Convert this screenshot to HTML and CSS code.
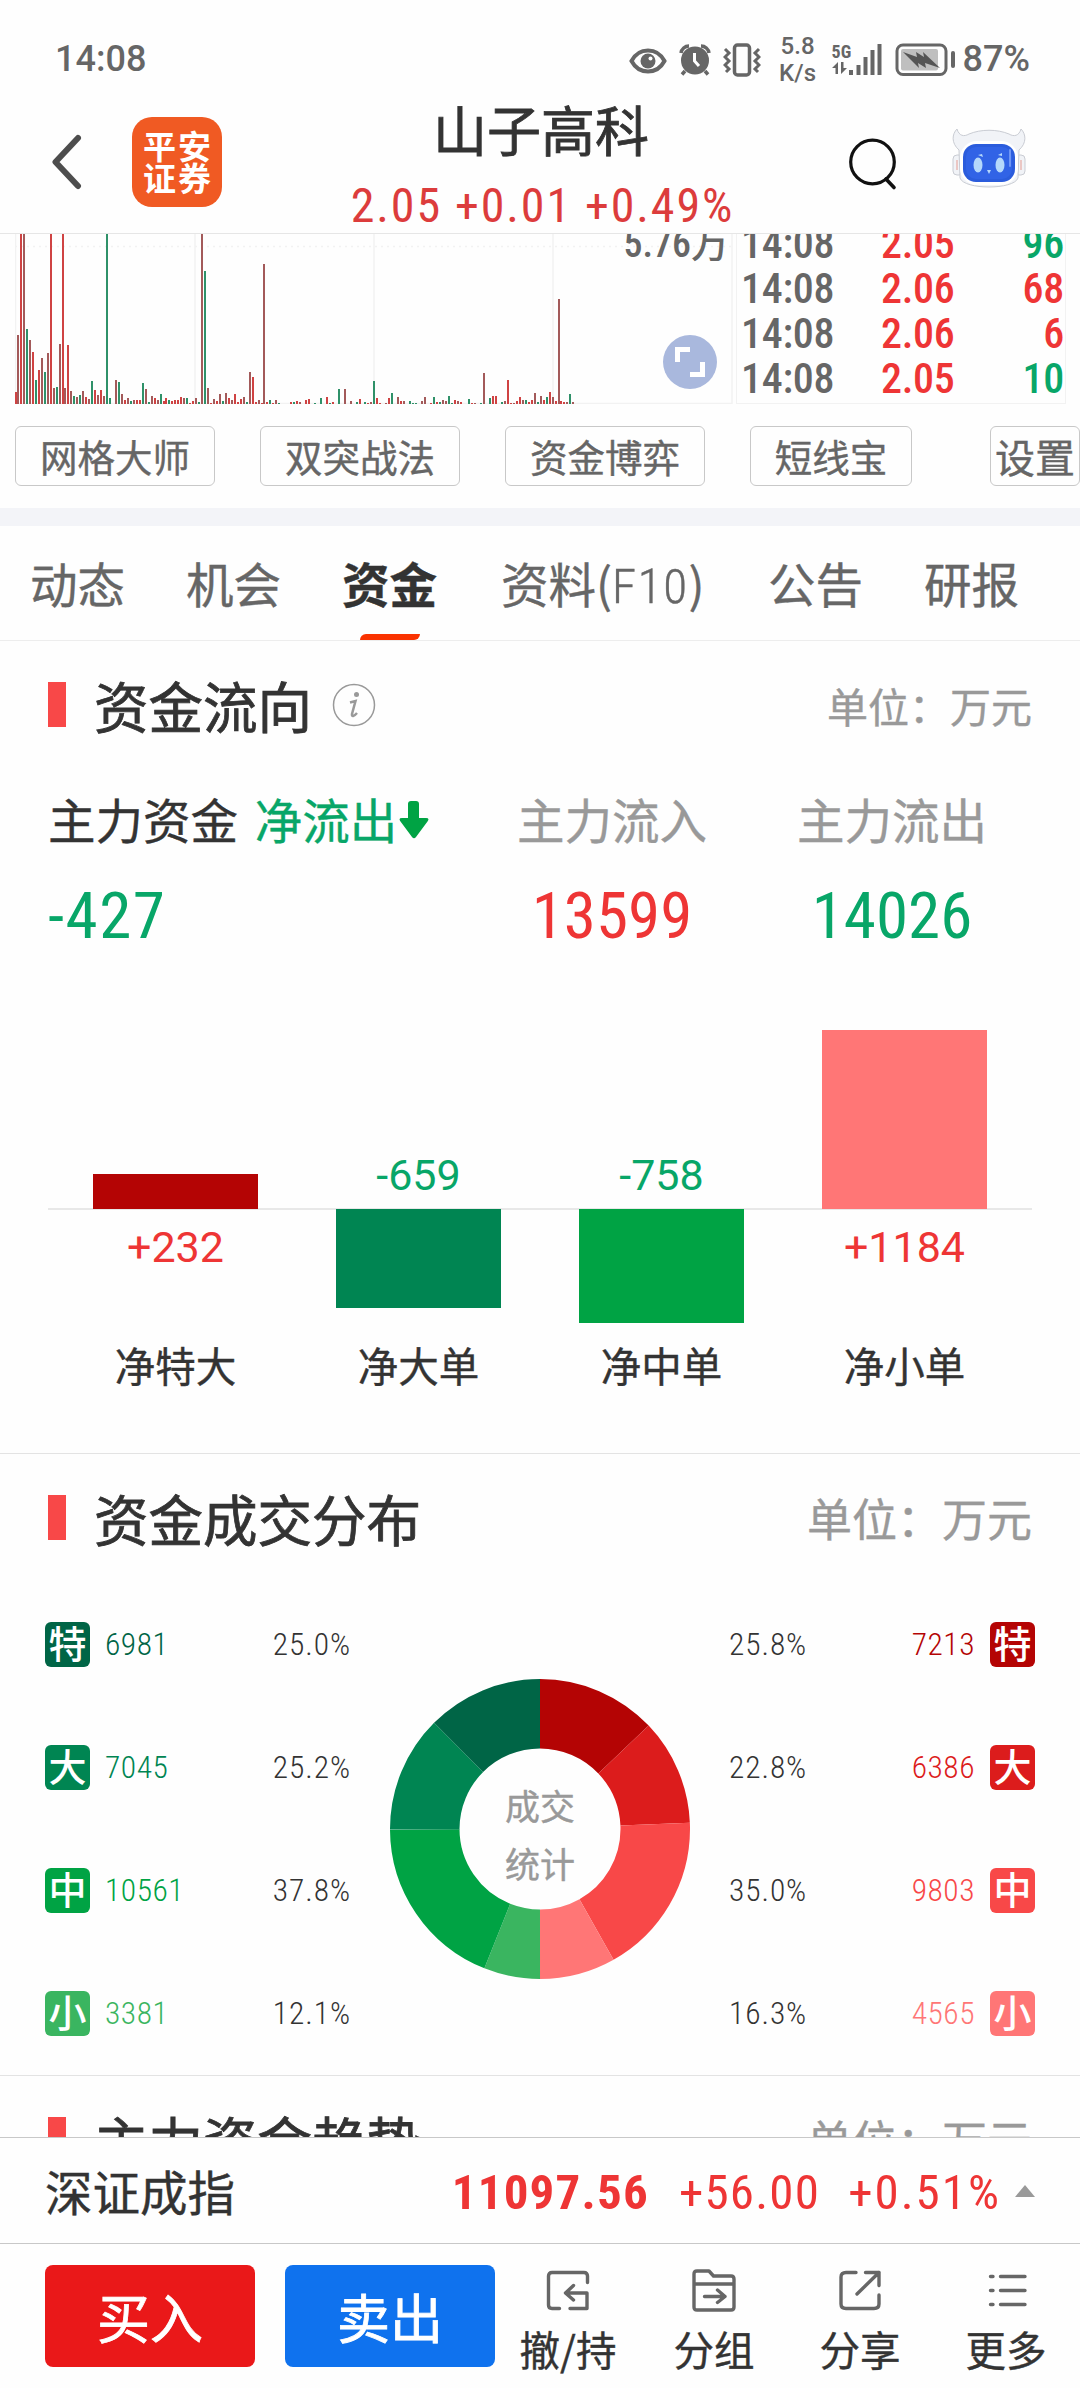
FILE: index.html
```
<!DOCTYPE html>
<html lang="zh-CN">
<head>
    <meta charset="UTF-8">
    <title>山子高科</title>
    <link rel="stylesheet" href="styles.css">
</head>
<body>
    <div class="status-bar">
        <span class="clock">14:08</span>
        <svg class="eye" width="38" height="26" viewBox="0 0 38 26">
            <path d="M2.500 13C10-1 28-1 35.500 13C28 27 10 27 2.500 13Z" fill="none" stroke="#666" stroke-width="4"/>
            <circle cx="19" cy="13" r="7.500"/>
            <circle cx="21.500" cy="10.500" r="2" fill="#fff"/>
        </svg>
        <svg class="alarm" width="32" height="32" viewBox="0 0 32 32">
            <circle cx="16" cy="16.500" r="14"/>
            <path d="M2 9A8 8 0 0 1 10 2M22 2A8 8 0 0 1 30 9M6 27L3 30.500M26 27L29 30.500" fill="none" stroke="#666" stroke-width="3.500"/>
            <path d="M15.500 9V17L20 22" fill="none" stroke="#fff" stroke-width="3"/>
        </svg>
        <svg class="vibrate" width="38" height="34" viewBox="0 0 38 34">
            <rect x="11.500" y="2" width="15" height="30" rx="3" fill="none" stroke="#666" stroke-width="3.500"/>
            <path d="M2 6l4 4-4 4 4 4-4 4 4 4-3 3M36 6l-4 4 4 4-4 4 4 4-4 4 3 3" fill="none" stroke="#666" stroke-width="3"/>
        </svg>
        <span class="speed">5.8<br>K/s</span>
        <div class="net">
            <span>5G</span>
            <svg width="50" height="34" viewBox="0 0 50 34">
                <path d="M0 26L6 20V32H3.500V26ZM9 20H11.500V26H15L9 32ZM17 28h4v5h-4zM24.500 23h4v10h-4zM31.500 15h4v18h-4zM38.500 8h4v25h-4zM45.500 2h4v31h-4z"/>
            </svg>
        </div>
        <svg class="battery" width="60" height="34" viewBox="0 0 60 34">
            <rect x="2" y="2" width="49" height="29.500" rx="6" fill="none" stroke="#666" stroke-width="3"/>
            <rect x="6" y="6" width="37" height="21.500" rx="2" fill="#bfbfbf"/>
            <path d="M8 9L22 14 21 9 29 14 28 9 45 25 30 20 31 25 23 20 24 25Z" fill="#555"/>
            <rect x="56" y="8" width="4" height="17" rx="2"/>
        </svg>
        <span class="percent">87%</span>
    </div>

    <div class="header">
        <svg class="back" width="30" height="56" viewBox="0 0 30 56">
            <path d="M26 4L3.500 28L26 52" fill="none" stroke="#4d4d4d" stroke-width="6" stroke-linecap="round" stroke-linejoin="round"/>
        </svg>
        <div class="logo">平安<br>证券</div>
        <div class="stock">
            <div class="stock-name">山子高科</div>
            <div class="stock-price">2.05 +0.01 +0.49%</div>
        </div>
        <svg class="search" width="50" height="54" viewBox="0 0 50 54">
            <circle cx="24.500" cy="25" r="21.800" fill="none" stroke="#111" stroke-width="3.200"/>
            <path d="M38 42L46 50.500" stroke="#111" stroke-width="3.600" stroke-linecap="round"/>
        </svg>
        <svg class="robot" width="74" height="62" viewBox="0 0 74 62">
            <g fill="#f1f3f7" stroke="#c9ccd3" stroke-width="1">
                <rect x="1" y="27" width="10" height="20" rx="4"/>
                <rect x="63" y="27" width="10" height="20" rx="4"/>
                <path d="M7 22C-1 15 0 6 5 1C7 8 12 9 17 6C29 1 45 1 57 6C62 9 67 8 69 1C74 6 75 15 67 22L66 50C62 62 12 62 8 50Z"/>
            </g>
            <path d="M5 32v10M69 32v10" stroke="#e9b9b4" stroke-width="1.500"/>
            <rect x="8" y="13" width="58" height="44" rx="17" fill="#fff"/>
            <rect x="11" y="16" width="52" height="38" rx="13" fill="#2b5cdc"/>
            <rect x="14" y="19" width="46" height="32" rx="10" fill="#3163e6"/>
            <path d="M58 22v16" stroke="#6f96f5" stroke-width="2" stroke-linecap="round"/>
            <g fill="#b5d8fb">
                <ellipse cx="26" cy="37" rx="4.500" ry="7.500"/>
                <ellipse cx="48" cy="37" rx="4.500" ry="7.500"/>
                <path d="M35 42h4l-2 4zM26 27l4-1 1 3zM46 27l4-2 0 3z"/>
            </g>
        </svg>
    </div>

    <div class="content">
        <div class="quote">
            <div class="volume">
                <svg id="volumeChart" width="718" height="170" viewBox="15 0 718 170">
                    <g fill="none" stroke="#f2f2f2" stroke-width="1.500">
                        <path d="M15.500 0V170M195 0V170M374 0V170M553 0V170M732 0V170M15 169.500H732"/>
                        <path d="M15 12.500H732" stroke-dasharray="2 4"/>
                    </g>
                </svg>
                <span class="volume-max">5.76万</span>
                <svg class="expand" width="54" height="54" viewBox="0 0 54 54">
                    <circle cx="27" cy="27" r="27" fill="#a9b8dd"/>
                    <path d="M14.500 27V14.500H27M27 39.500H39.500V27" fill="none" stroke="#fff" stroke-width="5"/>
                </svg>
            </div>
            <div class="tape">
                <div class="tick"><span>14:08</span><span class="up">2.05</span><span class="vol down">96</span></div>
                <div class="tick"><span>14:08</span><span class="up">2.06</span><span class="vol up">68</span></div>
                <div class="tick"><span>14:08</span><span class="up">2.06</span><span class="vol up">6</span></div>
                <div class="tick"><span>14:08</span><span class="up">2.05</span><span class="vol down">10</span></div>
            </div>
        </div>

        <div class="strategies">
            <button>网格大师</button>
            <button>双突战法</button>
            <button>资金博弈</button>
            <button class="short">短线宝</button>
            <button class="settings">设置</button>
        </div>

        <div class="tabs">
            <span>动态</span>
            <span>机会</span>
            <span class="active">资金</span>
            <span class="wide">资料(<i>F10</i>)</span>
            <span>公告</span>
            <span>研报</span>
        </div>

        <div class="section">
            <div class="section-head">
                <h2>资金流向</h2>
                <svg class="info" width="44" height="44" viewBox="0 0 44 44">
                    <circle cx="22" cy="22" r="20.500" fill="none" stroke="#999" stroke-width="1.500"/>
                    <circle cx="24.500" cy="11.500" r="2.500" fill="#999"/>
                    <path d="M18 19.500L23.500 18L20 31C19.500 34 22 33.500 25 30" fill="none" stroke="#999" stroke-width="2.500"/>
                </svg>
                <span class="unit small">单位：万元</span>
            </div>
            <div class="summary">
                <div class="summary-main">
                    <div class="label">主力资金 <span class="down">净流出</span><svg width="30" height="38" viewBox="0 0 30 38"><path d="M9 3Q9 0 12 0H17Q20 0 20 3V17H27Q31 17 28.500 20.500L17 36Q15 38.500 13 36L1.500 20.500Q-1 17 3 17H9Z" fill="#00a344"/></svg></div>
                    <div class="value down">-427</div>
                </div>
                <div class="summary-item">
                    <div class="label">主力流入</div>
                    <div class="value up">13599</div>
                </div>
                <div class="summary-item">
                    <div class="label">主力流出</div>
                    <div class="value down">14026</div>
                </div>
            </div>
            <div class="bars">
                <div class="bar-col">
                    <div class="above"><div class="bar" style="height:35px;background:#b40404"></div></div>
                    <div class="below"><span class="up">+232</span></div>
                    <div class="bar-name">净特大</div>
                </div>
                <div class="bar-col">
                    <div class="above"><span class="down">-659</span></div>
                    <div class="below"><div class="bar" style="height:99px;background:#008552"></div></div>
                    <div class="bar-name">净大单</div>
                </div>
                <div class="bar-col">
                    <div class="above"><span class="down">-758</span></div>
                    <div class="below"><div class="bar" style="height:114px;background:#00a344"></div></div>
                    <div class="bar-name">净中单</div>
                </div>
                <div class="bar-col">
                    <div class="above"><div class="bar" style="height:179px;background:#ff7676"></div></div>
                    <div class="below"><span class="up">+1184</span></div>
                    <div class="bar-name">净小单</div>
                </div>
            </div>
        </div>

        <div class="section">
            <div class="section-head">
                <h2>资金成交分布</h2>
                <span class="unit">单位：万元</span>
            </div>
            <div class="distribution">
                <div class="side">
                    <div class="row g1"><b>特</b><span>6981</span><em>25.0%</em></div>
                    <div class="row g2"><b>大</b><span>7045</span><em>25.2%</em></div>
                    <div class="row g3"><b>中</b><span>10561</span><em>37.8%</em></div>
                    <div class="row g4"><b>小</b><span>3381</span><em>12.1%</em></div>
                </div>
                <div class="donut">
                    <svg width="300" height="300" viewBox="0 0 300 300">
                        <g id="donutRing" fill="none" stroke-width="69.500" transform="rotate(-90 150 150)"></g>
                    </svg>
                    <div class="donut-label">成交<br>统计</div>
                </div>
                <div class="side right">
                    <div class="row r1"><b>特</b><span>7213</span><em>25.8%</em></div>
                    <div class="row r2"><b>大</b><span>6386</span><em>22.8%</em></div>
                    <div class="row r3"><b>中</b><span>9803</span><em>35.0%</em></div>
                    <div class="row r4"><b>小</b><span>4565</span><em>16.3%</em></div>
                </div>
            </div>
        </div>

        <div class="section">
            <div class="section-head">
                <h2>主力资金趋势</h2>
                <span class="unit">单位：万元</span>
            </div>
        </div>
    </div>

    <div class="index-bar">
        <span class="index-name">深证成指</span>
        <span class="index-value">11097.56</span>
        <span class="index-change">+56.00</span>
        <span class="index-percent">+0.51%</span>
        <i class="triangle"></i>
    </div>

    <div class="toolbar">
        <button class="buy">买入</button>
        <button class="sell">卖出</button>
        <div class="tools">
            <div class="tool">
                <svg width="44" height="44" viewBox="0 0 44 44">
                    <path d="M41.500 13.500V7Q41.500 3.500 38 3.500H6Q2.500 3.500 2.500 7V36Q2.500 39.500 6 39.500H13.500M24 39.500H41V24H20M27.500 16.500L19.500 24L27.500 31"/>
                </svg>
                撤/持
            </div>
            <div class="tool">
                <svg width="44" height="44" viewBox="0 0 44 44">
                    <path d="M2 5Q2 2 5 2H17L21.500 7H39Q42 7 42 10V38Q42 41 39 41H5Q2 41 2 38ZM2 15H42M12.500 27.500H33M25.500 21L33 27.500L25.500 33.500"/>
                </svg>
                分组
            </div>
            <div class="tool">
                <svg width="44" height="44" viewBox="0 0 44 44">
                    <path d="M18 3.500H8Q3 3.500 3 8V35Q3 39.500 8 39.500H36Q41 39.500 41 35V26M27.500 3.500H41V16.500M41 3.500L19 25"/>
                </svg>
                分享
            </div>
            <div class="tool">
                <svg width="44" height="44" viewBox="0 0 44 44">
                    <path d="M6.500 7.500H9M16.500 7.500H41M6.500 21.500H9M16.500 21.500H41M6.500 35.500H9M16.500 35.500H41"/>
                </svg>
                更多
            </div>
        </div>
    </div>

    <script>
        const NS = 'http://www.w3.org/2000/svg';

        // one bar per minute: height + colour, 0 = no trade
        const volumes = ('12r 69d 170r 170d 75g 64d 52r 24g 34r 46d 32g 51d 170r 16d 17g 60d 170r 16d 59r 13d ' +
            '8g 7d 9g 13d 7r 5d 23g 14r 9d 14r 8d 170g 6g 0 24d 22g 10d 4r 6d 3g 4d 4r 4r 21g 15d 2g 8d 6r 4d 10g ' +
            '3r 6r 4g 3r 4r 4r 7r 6d 6g 1r 3r 6d 2g 170d 133g 16d 1r 5d 3r 10d 3g 11d 6r 4d 10r 2r 5r 7d 2g 32d ' +
            '27r 2r 4d 1r 140d 2r 4g 1r 4d 1g 0 0 0 2r 2g 3r 2d 0 4r 5r 0 1g 0 6g 0 7r 1g 2r 0 15g 0 15d 0 3d 0 ' +
            '2g 5r 0 2g 1r 2d 23g 6r 1r 0 1d 6r 11g 0 7d 3r 3d 0 3g 1g 1g 0 3d 7d 0 1r 7g 2r 2g 4d 3d 8g 1g 4r ' +
            '3d 2r 0 0 5g 1r 1d 0 1g 31d 0 6g 8r 8r 0 2g 3d 24r 1r 1d 3r 7r 4d 4g 2r 4r 11d 2g 8d 4r 7g 12r 7d ' +
            '3r 105d 3r 2r 2d 10g 2d').split(' ');
        const volumeColors = { r: '#cf4343', d: '#a35a5a', g: '#2f9169' };
        const chart = document.getElementById('volumeChart');

        volumes.forEach((v, i) => {
            const h = parseInt(v);
            if (!h) return;
            const rect = document.createElementNS(NS, 'rect');
            rect.setAttribute('x', i ? Math.round(14 + i * 2.97) : 15);
            rect.setAttribute('y', 170 - h);
            rect.setAttribute('width', 2);
            rect.setAttribute('height', h);
            rect.setAttribute('fill', volumeColors[v.slice(-1)]);
            chart.appendChild(rect);
        });

        // clockwise from the top: inflow half, then outflow half
        const slices = [
            [7213, '#b40404'], [6386, '#dc1c1c'], [9803, '#f84848'], [4565, '#ff7676'],
            [3381, '#3ab560'], [10561, '#00a344'], [7045, '#008552'], [6981, '#006546']
        ];
        const total = slices.reduce((sum, s) => sum + s[0], 0);
        const ring = document.getElementById('donutRing');
        let offset = 0;

        slices.forEach(([value, color]) => {
            const circle = document.createElementNS(NS, 'circle');
            circle.setAttribute('cx', 150);
            circle.setAttribute('cy', 150);
            circle.setAttribute('r', 115.25);
            circle.setAttribute('pathLength', total);
            circle.setAttribute('stroke', color);
            circle.setAttribute('stroke-dasharray', value + ' ' + (total - value));
            circle.setAttribute('stroke-dashoffset', -offset);
            ring.appendChild(circle);
            offset += value;
        });
    </script>
</body>
</html>
```

FILE: styles.css
```
* {
    box-sizing: border-box;
}

body {
    margin: 0;
    width: 1080px;
    height: 2388px;
    display: flex;
    flex-direction: column;
    overflow: hidden;
    background: #fefefe;
    color: #333;
    font-family: "Noto Sans CJK SC", sans-serif;
}

svg {
    display: block;
    flex: none;
}

button {
    padding: 0;
    font-family: inherit;
}

.up {
    color: #ee3535;
}

.down {
    color: #08a668;
}

/* status bar */
.status-bar {
    flex: none;
    height: 80px;
    padding: 0 50px 0 55px;
    display: flex;
    align-items: flex-start;
    color: #666;
    fill: #666;
    font-family: Roboto, sans-serif;
    font-weight: 500;
    font-size: 36px;
    white-space: nowrap;
}

.clock {
    flex: 1;
    margin-top: 39px;
    line-height: 40px;
}

.eye {
    margin: 48px 12px 0 0;
}

.alarm {
    margin: 44px 12px 0 0;
}

.vibrate {
    margin: 43px 17px 0 0;
}

.speed {
    width: 40px;
    margin: 33px 14px 0 0;
    font-size: 24px;
    line-height: 27px;
    text-align: center;
}

.net {
    width: 50px;
    height: 34px;
    margin: 42px 13px 0 0;
    position: relative;
}

.net span {
    position: absolute;
    left: 0;
    top: 0;
    font: 700 18px/20px "Roboto Condensed", sans-serif;
}

.battery {
    margin: 43px 8px 0 0;
}

.percent {
    margin-top: 39px;
    line-height: 40px;
}

/* header */
.header {
    flex: none;
    height: 154px;
    padding: 0 54px 0 52px;
    display: flex;
    align-items: flex-start;
    border-bottom: 1px solid #e6e6e6;
}

.back {
    margin: 54px 50px 0 0;
}

.logo {
    width: 90px;
    height: 90px;
    margin-top: 37px;
    padding: 12px 0 0 2px;
    border-radius: 20px;
    background: #f05a23;
    color: #fff;
    font-size: 33px;
    font-weight: 700;
    line-height: 32px;
    letter-spacing: 2px;
    text-align: center;
}

.stock {
    flex: 1;
    margin-top: 19px;
    padding-left: 12px;
    text-align: center;
}

.stock-name {
    font-size: 54px;
    line-height: 60px;
    -webkit-text-stroke: 0.8px;
}

.stock-price {
    margin-top: 22px;
    padding-left: 3px;
    color: #dc3c3c;
    font: 48px/50px "Roboto Condensed", sans-serif;
    letter-spacing: 1.9px;
    white-space: nowrap;
}

.search {
    margin: 57px 54px 0 0;
}

.robot {
    margin-top: 48px;
}

/* scrolling part */
.content {
    flex: 1;
    min-height: 0;
    overflow: hidden;
}

.quote {
    display: flex;
    height: 170px;
    padding-left: 15px;
    overflow: hidden;
}

.volume {
    position: relative;
    width: 718px;
}

.volume-max {
    position: absolute;
    right: 4px;
    top: -12px;
    color: #666;
    font: 500 38px/44px "Roboto Condensed", "Noto Sans CJK SC", sans-serif;
}

.expand {
    position: absolute;
    right: 16px;
    bottom: 15px;
}

.tape {
    width: 330px;
    height: 184px;
    margin: -14px 0 0 3px;
    padding: 0 1px 0 4px;
    border: 1px solid #f2f2f2;
    color: #666;
    font: 500 42px/45px "Roboto Condensed", sans-serif;
    letter-spacing: -0.3px;
}

.tick {
    display: grid;
    grid-template-columns: 140px 90px 1fr;
}

.vol {
    text-align: right;
}

.strategies {
    display: flex;
    gap: 45px;
    padding: 22px 0 22px 15px;
}

.strategies button {
    width: 200px;
    height: 60px;
    background: none;
    border: 1px solid #c8c8c8;
    border-radius: 6px;
    color: #666;
    font-size: 37.5px;
    line-height: 56px;
    white-space: nowrap;
    -webkit-text-stroke: 0.4px;
}

.strategies .short {
    width: 162px;
}

.strategies .settings {
    width: 90px;
    margin-left: auto;
    font-size: 40px;
}

.tabs {
    display: flex;
    gap: 60px;
    height: 133px;
    padding: 29px 0 0 30px;
    border-top: 18px solid #f3f4f8;
    border-bottom: 1px solid #ededed;
    color: #666;
    font-size: 47.5px;
    line-height: 56px;
    white-space: nowrap;
    -webkit-text-stroke: 0.4px;
}

.tabs span {
    width: 96px;
    position: relative;
}

.tabs .wide {
    width: 207px;
    margin-left: 3px;
}

.tabs i {
    font: 300 49px/56px "Roboto Condensed", sans-serif;
    letter-spacing: 1.6px;
}

.tabs .active {
    color: #333;
    font-weight: 700;
}

.tabs .active::after {
    content: "";
    position: absolute;
    left: 18px;
    bottom: 0;
    width: 60px;
    height: 6px;
    border-radius: 6px 0 6px 0;
    background: #fa3200;
}

.section {
    padding-top: 36px;
    border-bottom: 1px solid #e3e3e3;
}

.section-head {
    display: flex;
    align-items: center;
    height: 55px;
    padding: 0 48px;
}

.section-head::before {
    content: "";
    width: 18px;
    height: 45px;
    margin-right: 28px;
    background: #f84848;
}

h2 {
    margin: 0;
    font-size: 54.5px;
    font-weight: 400;
    line-height: 54px;
    -webkit-text-stroke: 0.8px;
}

.info {
    margin-left: 20px;
}

.unit {
    margin-left: auto;
    color: #999;
    font-size: 45px;
    line-height: 54px;
    -webkit-text-stroke: 0.4px;
}

.unit.small {
    font-size: 41px;
}

.summary {
    display: flex;
    padding: 59px 48px 0;
}

.summary-main {
    width: 424px;
}

.summary-item {
    width: 280px;
    text-align: center;
}

.summary-item .label {
    color: #999;
}

.label {
    font-size: 47.5px;
    line-height: 56px;
    white-space: nowrap;
    -webkit-text-stroke: 0.4px;
}

.label .down {
    margin-left: 6px;
}

.label svg {
    display: inline-block;
    margin-left: 2px;
    vertical-align: 0;
}

.value {
    margin-top: 31px;
    font: 450 65px/76px "Roboto Condensed", sans-serif;
}

.summary-main .value {
    letter-spacing: 1.5px;
}

/* net order bars, the zero line is the background */
.bars {
    display: flex;
    margin: 46px 48px 0;
    padding: 0 6px 64px;
    background: linear-gradient(#e8e8e8, #e8e8e8) 0 208px / 100% 2px no-repeat;
    font: 43px/50px Roboto, sans-serif;
}

.bar-col {
    flex: 1;
    text-align: center;
}

.above {
    height: 209px;
    display: flex;
    flex-direction: column;
    justify-content: flex-end;
}

.above span {
    margin-bottom: 9px;
}

.below {
    height: 132px;
}

.below span {
    display: block;
    padding-top: 13px;
}

.bar {
    width: 165px;
    margin: 0 auto;
}

.bar-name {
    font: 40.5px/48px "Noto Sans CJK SC", sans-serif;
    -webkit-text-stroke: 0.4px;
}

/* turnover distribution */
.distribution {
    display: flex;
    align-items: center;
    justify-content: space-between;
    padding: 77px 45px 39px;
}

.side {
    width: 306px;
    display: flex;
    flex-direction: column;
    gap: 78px;
}

.row {
    display: flex;
    align-items: center;
    gap: 15px;
    height: 45px;
    font: 350 31.5px/45px "Roboto Condensed", sans-serif;
    letter-spacing: 0.5px;
}

.right .row {
    flex-direction: row-reverse;
}

.row b {
    width: 45px;
    height: 45px;
    border-radius: 6px;
    color: #fff;
    font: 500 38px/40px "Noto Sans CJK SC", sans-serif;
    letter-spacing: 0;
    text-align: center;
}

.row em {
    margin-left: auto;
    color: #333;
    font-style: normal;
    letter-spacing: 0.9px;
}

.right .row em {
    margin: 0 auto 0 0;
}

.g1 { color: #006546; }
.g2 { color: #008552; }
.g3 { color: #00a344; }
.g4 { color: #3ab560; }
.r1 { color: #b40404; }
.r2 { color: #dc1c1c; }
.r3 { color: #f84848; }
.r4 { color: #ff7676; }
.g1 b { background: #006546; }
.g2 b { background: #008552; }
.g3 b { background: #00a344; }
.g4 b { background: #3ab560; }
.r1 b { background: #b40404; }
.r2 b { background: #dc1c1c; }
.r3 b { background: #f84848; }
.r4 b { background: #ff7676; }

.donut {
    position: relative;
}

.donut-label {
    position: absolute;
    left: 0;
    top: 97px;
    width: 100%;
    color: #999;
    font-size: 35px;
    line-height: 58px;
    text-align: center;
    -webkit-text-stroke: 0.4px;
}

/* bottom bars */
.index-bar {
    flex: none;
    height: 106px;
    padding: 0 45px;
    display: flex;
    align-items: center;
    border-top: 1px solid #c8c8c8;
    color: #ee3535;
    font: 49px/52px "Roboto Condensed", sans-serif;
    letter-spacing: 1.2px;
}

.index-bar span {
    padding-top: 4px;
}

.index-bar .index-name {
    flex: 1;
    padding-top: 0;
    color: #333;
    font: 47.5px/56px "Noto Sans CJK SC", sans-serif;
    letter-spacing: 0;
    -webkit-text-stroke: 0.4px;
}

.index-value {
    font-weight: 700;
    margin-right: 30px;
}

.index-change {
    margin-right: 28px;
}

.index-percent {
    margin-right: 14px;
    letter-spacing: 2px;
}

.triangle {
    border: 10.5px solid transparent;
    border-top: none;
    border-bottom: 12px solid #999;
}

.toolbar {
    flex: none;
    display: flex;
    height: 145px;
    padding: 21px 0 0 45px;
    border-top: 1px solid #c8c8c8;
}

.toolbar button {
    width: 210px;
    height: 102px;
    margin-right: 30px;
    border: none;
    border-radius: 8px;
    color: #fff;
    font-size: 53px;
    line-height: 96px;
    -webkit-text-stroke: 0.8px;
}

.toolbar .buy {
    background: #ea1819;
}

.toolbar .sell {
    margin-right: 0;
    background: #0f72ee;
}

.tools {
    display: flex;
}

.tool {
    width: 146px;
    padding-top: 4px;
    font-size: 40.5px;
    line-height: 48px;
    text-align: center;
    -webkit-text-stroke: 0.4px;
}

.tool svg {
    margin: 0 auto 12px;
    fill: none;
    stroke: #666;
    stroke-width: 3.4;
    stroke-linecap: round;
    stroke-linejoin: round;
}
```
